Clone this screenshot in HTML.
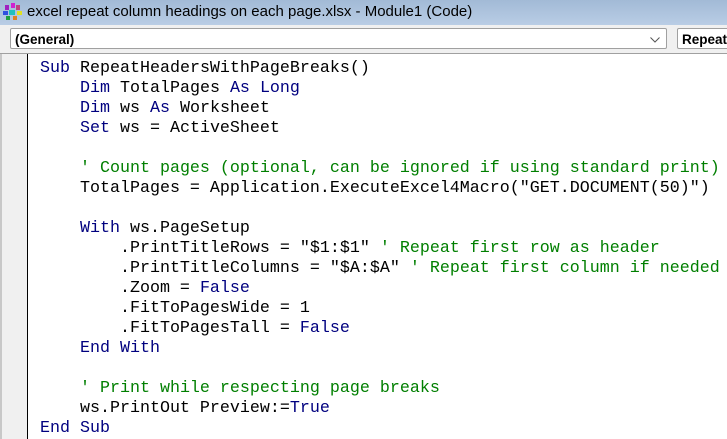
<!DOCTYPE html>
<html><head><style>
body{margin:0;width:727px;height:439px;overflow:hidden;background:#fff;position:relative;font-family:"Liberation Sans",sans-serif}
#title{position:absolute;left:0;top:0;width:727px;height:25px;background:linear-gradient(#a2bad6,#b9cde5);}
#title span{position:absolute;left:27px;top:3px;font-size:15px;color:#000}
#tb{position:absolute;left:0;top:25px;width:727px;height:28px;background:#f0f0f0;border-bottom:1px solid #a0a0a0}
.combo{position:absolute;top:3px;height:21px;background:#fff;border:1px solid #a0a0a0;border-radius:2px;font-weight:bold;font-size:13.5px;line-height:21px;padding-left:4px;box-sizing:border-box}
#gut{position:absolute;left:0;top:54px;width:28px;height:385px;background:#f0f0f0;border-left:2px solid #c8c8c8;box-sizing:border-box;border-right:1px solid #000}
pre{position:absolute;left:40px;top:59px;margin:0;font-family:"Liberation Mono",monospace;font-size:16.67px;line-height:20px;color:#000}
.k{color:#00007f}.c{color:#007f00}
</style></head><body>
<div id="title">
<svg style="position:absolute;left:3px;top:3px" width="20" height="18" viewBox="0 0 20 18"><rect x="2" y="2" width="4" height="5" fill="#a020c0"/><rect x="8" y="0" width="4" height="5" fill="#d020d0"/><rect x="13" y="2" width="4" height="5" fill="#c04080"/><rect x="0" y="8" width="5" height="4" fill="#3050e0"/><rect x="6" y="7" width="6" height="5" fill="#20c0c0"/><rect x="14" y="8" width="5" height="4" fill="#e0e020"/><rect x="3" y="13" width="4" height="4" fill="#20a040"/><rect x="10" y="13" width="4" height="4" fill="#e08020"/></svg>
<span>excel repeat column headings on each page.xlsx - Module1 (Code)</span></div>
<div id="tb">
<div class="combo" style="left:10px;width:657px">(General)<svg style="position:absolute;right:6px;top:8px" width="10" height="6"><path d="M0.5 0.5L5 5L9.5 0.5" fill="none" stroke="#555"/></svg></div>
<div class="combo" style="left:677px;width:60px">Repeat</div>
</div>
<div id="gut"></div>
<pre><span class="k">Sub</span> RepeatHeadersWithPageBreaks()
    <span class="k">Dim</span> TotalPages <span class="k">As</span> <span class="k">Long</span>
    <span class="k">Dim</span> ws <span class="k">As</span> Worksheet
    <span class="k">Set</span> ws = ActiveSheet

    <span class="c">' Count pages (optional, can be ignored if using standard print)</span>
    TotalPages = Application.ExecuteExcel4Macro("GET.DOCUMENT(50)")

    <span class="k">With</span> ws.PageSetup
        .PrintTitleRows = "$1:$1" <span class="c">' Repeat first row as header</span>
        .PrintTitleColumns = "$A:$A" <span class="c">' Repeat first column if needed</span>
        .Zoom = <span class="k">False</span>
        .FitToPagesWide = 1
        .FitToPagesTall = <span class="k">False</span>
    <span class="k">End</span> <span class="k">With</span>

    <span class="c">' Print while respecting page breaks</span>
    ws.PrintOut Preview:=<span class="k">True</span>
<span class="k">End</span> <span class="k">Sub</span></pre>
</body></html>
